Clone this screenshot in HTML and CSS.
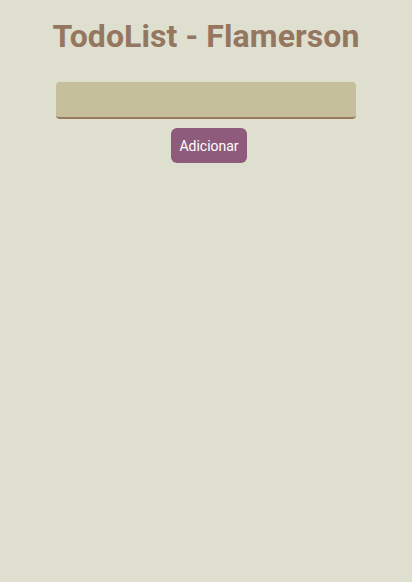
FILE: index.html
```html
<!DOCTYPE html>
<html lang="pt">
<head>
<meta charset="utf-8">
<title>TodoList - Flamerson</title>
<link rel="stylesheet" href="styles.css">
</head>
<body>
<main class="app">
  <h1 class="title">TodoList - Flamerson</h1>
  <form class="todo-form">
    <input class="todo-input" type="text">
    <button class="todo-button" type="button">Adicionar</button>
  </form>
</main>
</body>
</html>
```
FILE: styles.css
```css
html, body {
  margin: 0;
  padding: 0;
  background: #dedfcf;
  font-family: Roboto, "Liberation Sans", sans-serif;
}
.app {
  display: flex;
  flex-direction: column;
  align-items: center;
  padding-top: 16px;
}
.title {
  margin: 0;
  font-size: 32px;
  font-weight: 700;
  line-height: 40px;
  letter-spacing: 0.1px;
  color: #957660;
}
.todo-form {
  margin-top: 26px;
  display: flex;
  flex-direction: column;
  align-items: center;
  gap: 9px;
}
.todo-input {
  box-sizing: border-box;
  width: 300px;
  height: 37px;
  border: none;
  border-bottom: 2px solid #9a7a5e;
  border-radius: 4px;
  background: #c5bf9b;
  outline: none;
}
.todo-button {
  box-sizing: border-box;
  height: 35px;
  margin-left: 6px;
  padding: 0 8px;
  border: none;
  border-radius: 6px;
  background: #8e5b7c;
  color: #fff;
  font-family: Roboto, "Liberation Sans", sans-serif;
  font-size: 14px;
}
```
